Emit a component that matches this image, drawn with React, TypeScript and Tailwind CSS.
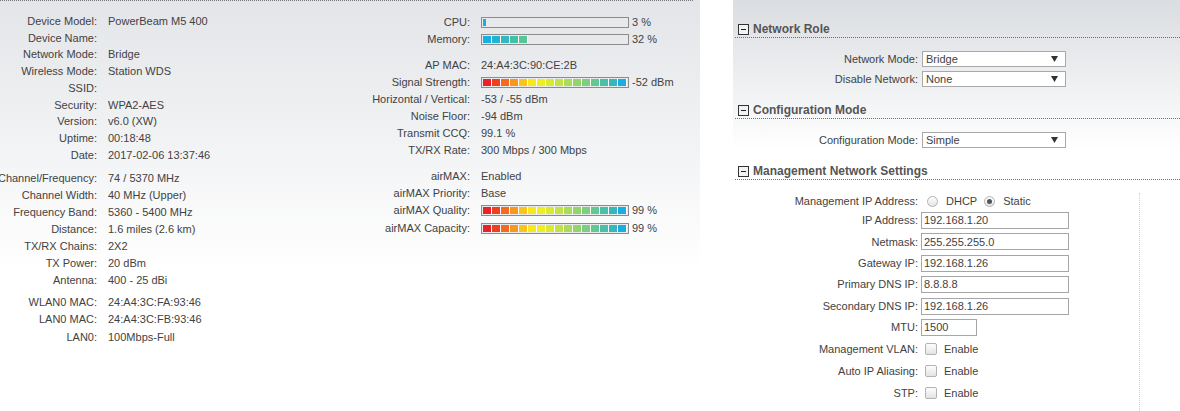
import React from 'react';

const SIGNAL = [
  '#e8212a', '#ef3f20', '#f46a1f', '#f8971d', '#fcc31a', '#fbe61a',
  '#eeee20', '#d9ea31', '#c2e443', '#aadd57', '#92d66b', '#7ad07f',
  '#62c893', '#4ac1a6', '#33b9bd', '#17aee2',
];
const MEMORY = ['#17aee2', '#22b3d2', '#33b9bd', '#44bfab', '#58c597'];

function Bar({ colors, cpu }: { colors: string[]; cpu?: boolean }) {
  return (
    <div className="flex h-[11px] w-[148px] shrink-0 border border-[#8c8c8c] bg-[#e8e9eb] p-px">
      {cpu && <div className="h-full w-[3px] bg-[#17aee2]" />}
      {colors.map((c, i) => (
        <div key={i} className="h-full w-[9px] border-r border-white" style={{ backgroundColor: c }} />
      ))}
    </div>
  );
}

function InfoRow({ label, value, h = 'h-[17px]' }: { label: string; value?: React.ReactNode; h?: string }) {
  return (
    <div className={`flex items-center ${h}`}>
      <div className="flex w-[97px] shrink-0 justify-end whitespace-nowrap">{label}</div>
      <div className="ml-[11px] flex items-center whitespace-nowrap">{value}</div>
    </div>
  );
}

function StatRow({ label, value, h = 'h-[17px]' }: { label: string; value?: React.ReactNode; h?: string }) {
  return (
    <div className={`flex items-center ${h}`}>
      <div className="flex w-[170px] shrink-0 justify-end whitespace-nowrap">{label}</div>
      <div className="ml-[11px] flex items-center whitespace-nowrap">{value}</div>
    </div>
  );
}

function BarValue({ colors, text, cpu }: { colors: string[]; text: string; cpu?: boolean }) {
  return (
    <>
      <Bar colors={colors} cpu={cpu} />
      <span className="ml-[3px]">{text}</span>
    </>
  );
}

function SectionHeader({ title, className }: { title: string; className: string }) {
  return (
    <div className={`ml-[2px] flex h-[17px] items-center border-b border-dotted border-[#6f6f6f] pl-[3px] ${className}`}>
      <div className="flex h-[11px] w-[11px] items-center justify-center border border-[#333] bg-[#f2f2f2]">
        <div className="h-px w-[5px] bg-[#222]" />
      </div>
      <span className="ml-[4px] text-[12px] font-bold text-[#555]">{title}</span>
    </div>
  );
}

function FormRow({ label, children, className = '' }: { label: string; children: React.ReactNode; className?: string }) {
  return (
    <div className={`flex items-center ${className}`}>
      <div className="flex w-[185px] shrink-0 justify-end whitespace-nowrap">{label}</div>
      <div className="ml-[3px] flex items-center">{children}</div>
    </div>
  );
}

function Select({ value }: { value: string }) {
  return (
    <div className="ml-px flex h-[16px] w-[144px] items-center justify-between border border-[#a9a9a9] bg-white pl-[3px] pr-[7px]">
      <span>{value}</span>
      <svg width="7" height="6" viewBox="0 0 7 6">
        <path d="M0 0 H7 L3.5 6 Z" fill="#333" />
      </svg>
    </div>
  );
}

function Input({ value, w = 'w-[148px]' }: { value: string; w?: string }) {
  return (
    <div className={`flex h-[17px] items-center border border-[#a6a6a6] bg-white pl-[2px] ${w}`}>{value}</div>
  );
}

function Radio({ checked }: { checked?: boolean }) {
  return (
    <div className="flex h-[11px] w-[11px] items-center justify-center rounded-full border border-[#b3b3b3] bg-[linear-gradient(to_bottom,#fdfdfd,#e6e6e6)]">
      {checked && <div className="h-[5px] w-[5px] rounded-full bg-[#555]" />}
    </div>
  );
}

function Check() {
  return (
    <div className="ml-[4px] h-[12px] w-[12px] rounded-[2px] border border-[#b3b3b3] bg-[linear-gradient(to_bottom,#fdfdfd,#e4e4e4)]" />
  );
}

export default function App() {
  return (
    <div className="flex h-[411px] w-[1180px] overflow-hidden bg-white font-['Liberation_Sans',Arial,sans-serif] text-[11px] text-[#424242]">
      {/* Status page */}
      <div className="flex w-[700px] shrink-0 flex-col overflow-hidden bg-[linear-gradient(to_bottom,#e3e5e8,#ffffff_270px)]">
        <div className="w-[693px] border-t border-dotted border-[#777]" />
        <div className="flex">
          <div className="w-[300px] shrink-0 pt-[12px]">
            <InfoRow h="h-[16.7px]" label="Device Model:" value="PowerBeam M5 400" />
            <InfoRow h="h-[16.7px]" label="Device Name:" />
            <InfoRow h="h-[16.7px]" label="Network Mode:" value="Bridge" />
            <InfoRow h="h-[16.7px]" label="Wireless Mode:" value="Station WDS" />
            <InfoRow h="h-[16.7px]" label="SSID:" />
            <InfoRow h="h-[16.7px]" label="Security:" value="WPA2-AES" />
            <InfoRow h="h-[16.7px]" label="Version:" value="v6.0 (XW)" />
            <InfoRow h="h-[16.7px]" label="Uptime:" value="00:18:48" />
            <InfoRow h="h-[16.7px]" label="Date:" value="2017-02-06 13:37:46" />
            <div className="mt-[7px]">
              <InfoRow label="Channel/Frequency:" value="74 / 5370 MHz" />
              <InfoRow label="Channel Width:" value="40 MHz (Upper)" />
              <InfoRow label="Frequency Band:" value="5360 - 5400 MHz" />
              <InfoRow label="Distance:" value="1.6 miles (2.6 km)" />
              <InfoRow label="TX/RX Chains:" value="2X2" />
              <InfoRow label="TX Power:" value="20 dBm" />
              <InfoRow label="Antenna:" value="400 - 25 dBi" />
            </div>
            <div className="mt-[4px]">
              <InfoRow h="h-[17.5px]" label="WLAN0 MAC:" value="24:A4:3C:FA:93:46" />
              <InfoRow h="h-[17.5px]" label="LAN0 MAC:" value="24:A4:3C:FB:93:46" />
              <InfoRow h="h-[17.5px]" label="LAN0:" value="100Mbps-Full" />
            </div>
          </div>

          <div className="pt-[13px]">
            <StatRow label="CPU:" value={<BarValue colors={[]} cpu text="3 %" />} />
            <StatRow h="h-[16.5px]" label="Memory:" value={<BarValue colors={MEMORY} text="32 %" />} />
            <div className="mt-[9px]">
              <StatRow label="AP MAC:" value="24:A4:3C:90:CE:2B" />
              <StatRow label="Signal Strength:" value={<BarValue colors={SIGNAL} text="-52 dBm" />} />
              <StatRow label="Horizontal / Vertical:" value="-53 / -55 dBm" />
              <StatRow label="Noise Floor:" value="-94 dBm" />
              <StatRow label="Transmit CCQ:" value="99.1 %" />
              <StatRow label="TX/RX Rate:" value="300 Mbps / 300 Mbps" />
            </div>
            <div className="mt-[9px]">
              <StatRow h="h-[17.3px]" label="airMAX:" value="Enabled" />
              <StatRow h="h-[17.3px]" label="airMAX Priority:" value="Base" />
              <StatRow h="h-[17.3px]" label="airMAX Quality:" value={<BarValue colors={SIGNAL} text="99 %" />} />
              <StatRow h="h-[17.3px]" label="airMAX Capacity:" value={<BarValue colors={SIGNAL} text="99 %" />} />
            </div>
          </div>
        </div>
      </div>

      <div className="w-[33px] shrink-0 bg-white" />

      {/* Network settings page */}
      <div className="flex flex-1 flex-col bg-[linear-gradient(to_bottom,#dadde1,#ffffff_150px)]">
        <SectionHeader title="Network Role" className="mt-[21px]" />
        <FormRow label="Network Mode:" className="mt-[13px] h-[16px]">
          <Select value="Bridge" />
        </FormRow>
        <FormRow label="Disable Network:" className="mt-[4px] h-[16px]">
          <Select value="None" />
        </FormRow>

        <SectionHeader title="Configuration Mode" className="mt-[15px]" />
        <FormRow label="Configuration Mode:" className="mt-[13px] h-[16px]">
          <Select value="Simple" />
        </FormRow>

        <SectionHeader title="Management Network Settings" className="mt-[15px]" />
        <div className="mt-[13px] flex flex-1">
          <div className="flex w-[406px] shrink-0 flex-col">
            <FormRow label="Management IP Address:" className="h-[17px]">
              <div className="ml-[6px] flex items-center">
                <Radio />
                <span className="ml-[8px]">DHCP</span>
                <div className="ml-[7px]">
                  <Radio checked />
                </div>
                <span className="ml-[8px]">Static</span>
              </div>
            </FormRow>
            <div className="mt-[2px] flex flex-col gap-[4.4px]">
              <FormRow label="IP Address:">
                <Input value="192.168.1.20" />
              </FormRow>
              <FormRow label="Netmask:">
                <Input value="255.255.255.0" />
              </FormRow>
              <FormRow label="Gateway IP:">
                <Input value="192.168.1.26" />
              </FormRow>
              <FormRow label="Primary DNS IP:">
                <Input value="8.8.8.8" />
              </FormRow>
              <FormRow label="Secondary DNS IP:">
                <Input value="192.168.1.26" />
              </FormRow>
              <FormRow label="MTU:">
                <Input value="1500" w="w-[56px]" />
              </FormRow>
            </div>
            <div className="mt-[2px]">
              <FormRow label="Management VLAN:" className="h-[22px]">
                <Check />
                <span className="ml-[7px]">Enable</span>
              </FormRow>
              <FormRow label="Auto IP Aliasing:" className="h-[22px]">
                <Check />
                <span className="ml-[7px]">Enable</span>
              </FormRow>
              <FormRow label="STP:" className="h-[23px]">
                <Check />
                <span className="ml-[7px]">Enable</span>
              </FormRow>
            </div>
          </div>
          <div className="border-l border-dotted border-[#cfcfcf]" />
        </div>
      </div>
    </div>
  );
}
